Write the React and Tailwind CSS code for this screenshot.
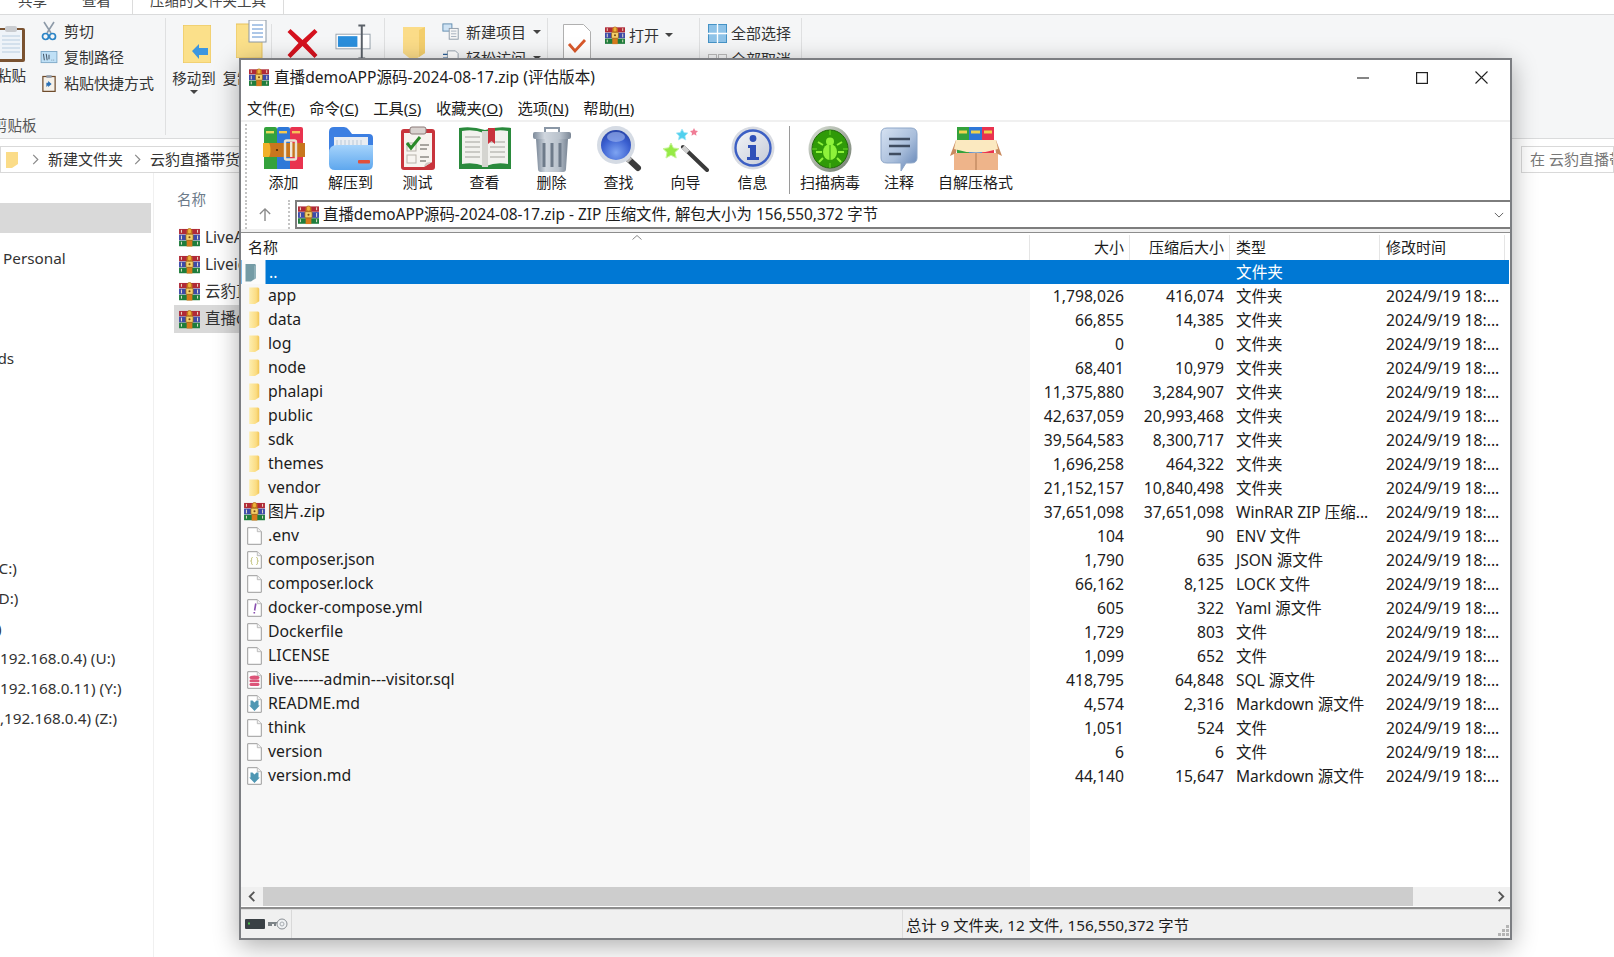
import React from "react";

const FONT = "[font-family:'Noto_Sans','Noto_Sans_CJK_SC',sans-serif]";

function Rar({ className = "w-[21px] h-[19px]" }) {
  return (
    <svg viewBox="0 0 22 20" className={className + " shrink-0"}>
      <rect x="0" y="1" width="22" height="5.6" fill="#b02a37" />
      <rect x="0" y="7" width="22" height="6" fill="#3d4aa8" />
      <rect x="0" y="13.4" width="22" height="5.8" fill="#1f7d3c" />
      <path d="M2.5 2v3M2.5 8v4M2.5 14.5v3M19.5 2v3M19.5 8v4M19.5 14.5v3" stroke="#f1ead0" strokeWidth="1" />
      <rect x="8" y="2" width="6" height="17.5" fill="#d77a1c" />
      <rect x="7.2" y="6.5" width="7.6" height="6.5" rx="1" fill="#f4cf6a" stroke="#8a5a12" strokeWidth="0.7" />
      <rect x="9" y="0.6" width="4" height="5.4" rx="1.6" fill="#f0b23c" stroke="#a86a14" strokeWidth="0.7" />
      <circle cx="11" cy="9.7" r="1.1" fill="#7a4a10" />
    </svg>
  );
}

function Folder() {
  return (
    <svg viewBox="0 0 12 18" className="w-[13px] h-[19px] shrink-0">
      <defs>
        <linearGradient id="fold" x1="0" x2="1" y1="0" y2="0">
          <stop offset="0" stopColor="#fdeeb0" />
          <stop offset="0.7" stopColor="#fbdc82" />
          <stop offset="1" stopColor="#f0c454" />
        </linearGradient>
      </defs>
      <path d="M1 1.5h8.5l1 1v12l-4 2.5H1z" fill="url(#fold)" />
    </svg>
  );
}

function ParentFolder() {
  return (
    <svg viewBox="0 0 24 24" className="w-[25px] h-[24px] shrink-0">
      <rect width="24" height="24" fill="#fbfbfb" />
      <path d="M4 4h9.5l1 1v13l-5 3.5H4z" fill="#749ba5" />
      <path d="M14.5 5v13l-2 1.5V6z" fill="#8fb0b8" />
    </svg>
  );
}

function Page({ kind }) {
  return (
    <svg viewBox="0 0 15 18" className="w-[15px] h-[18px] shrink-0">
      <path d="M.7.7h9.6l4 4v12.6H.7z" fill="#fff" stroke="#9c9c9c" strokeWidth="1" />
      <path d="M10.3.7v4h4" fill="#f1f1f1" stroke="#b0b0b0" strokeWidth="0.8" />
      {kind === "json" && (
        <path d="M5.6 6.5c-1.3 0-1 1-1 2s-.2 1.4-1 1.5c.8.1 1 .5 1 1.5s-.3 2 1 2M9.4 6.5c1.3 0 1 1 1 2s.2 1.4 1 1.5c-.8.1-1 .5-1 1.5s.3 2-1 2" fill="none" stroke="#b4b65e" strokeWidth="0.9" />
      )}
      {kind === "yml" && <path d="M8.8 4.5 7.6 11.5M7.3 13v1.6" stroke="#8a4fb0" strokeWidth="1.6" fill="none" />}
      {kind === "sql" && (
        <g fill="#dc5478">
          <ellipse cx="7.5" cy="6.5" rx="5" ry="2" />
          <rect x="2.5" y="8.6" width="10" height="2.6" rx="1.2" />
          <rect x="2.5" y="12" width="10" height="3" rx="1.4" />
        </g>
      )}
      {kind === "md" && <path d="M3.5 5.5h2l2 2 2-2h2v5h1.3L7.5 16 2.2 10.5h1.3z" fill="#4f97b3" />}
    </svg>
  );
}

const IcAdd = () => (
  <svg viewBox="0 0 42 44" className="w-[42px] h-[44px]">
    <path d="M1 3q0-2 2-2h9q2 0 2 2v40H1z" fill="#34a23c" />
    <path d="M14 3q0-2 2-2h9q2 0 2 2v40H14z" fill="#2f78d8" />
    <path d="M27 3q0-2 2-2h9q2 0 2 2v40H27z" fill="#e9334f" />
    <rect x="3" y="5" width="8" height="2.4" fill="#e9d95a" />
    <rect x="16" y="5" width="8" height="2.4" fill="#f3c851" />
    <rect x="29" y="5" width="8" height="2.4" fill="#f6c15a" />
    <rect x="0" y="17" width="42" height="14" fill="#c8761e" />
    <path d="M0 17h6c2 3 2 11 0 14H0z" fill="#f0b12a" />
    <rect x="22" y="14.5" width="11" height="19" rx="1.5" fill="none" stroke="#e9e2d4" strokeWidth="2.4" />
    <circle cx="14" cy="24" r="1.1" fill="#4a2a08" />
    <rect x="27" y="16" width="2.4" height="15" fill="#efe8da" />
  </svg>
);
const IcExtract = () => (
  <svg viewBox="0 0 46 44" className="w-[46px] h-[44px]">
    <defs>
      <linearGradient id="ex1" x1="0" x2="0" y1="0" y2="1">
        <stop offset="0" stopColor="#a5d3fb" />
        <stop offset="1" stopColor="#5ea7ee" />
      </linearGradient>
    </defs>
    <path d="M1 6q0-5 5-5h10q3 0 5 3l3 4h17q4 0 4 4v24H1z" fill="#3c7fe2" />
    <rect x="6" y="11" width="34" height="14" fill="#e9edf2" />
    <path d="M9 14v8M13 14v8M17 14v8M21 14v8M25 14v8M29 14v8M33 14v8" stroke="#b9c8d8" strokeWidth="1" />
    <path d="M1 27q0-8 8-8h36v19q0 6-6 6H7q-6 0-6-6z" fill="url(#ex1)" />
    <rect x="30" y="34" width="12" height="3.4" rx="1" fill="#e0503c" />
  </svg>
);
const IcTest = () => (
  <svg viewBox="0 0 36 44" className="w-[36px] h-[44px]">
    <rect x="1" y="3" width="34" height="41" rx="3" fill="#c8343c" />
    <path d="M4 7h28v29l-8 5H4z" fill="#f7f4f0" />
    <path d="M24 41l8-5c-2 0-5 0-6 1s-2 3-2 4z" fill="#cfc9c4" />
    <rect x="10" y="1" width="16" height="7" rx="2" fill="#d9d3d0" stroke="#8b7a78" strokeWidth="1" />
    <rect x="7" y="17" width="9" height="8" fill="none" stroke="#b8b2aa" />
    <rect x="7" y="29" width="9" height="8" fill="none" stroke="#b8b2aa" />
    <path d="M7 17l4 5 9-11" fill="none" stroke="#2b8a2a" strokeWidth="3" />
    <path d="M20 19h9M20 23h7M20 31h9M20 35h6" stroke="#8f8a85" strokeWidth="1.4" />
  </svg>
);
const IcView = () => (
  <svg viewBox="0 0 52 44" className="w-[52px] h-[44px]">
    <path d="M0 2q13-2 26 2q13-4 26-2v41H0z" fill="#2a8a3c" />
    <path d="M3 5q12-2 22 2v33q-10-4-22-2z" fill="#f2f2ee" />
    <path d="M49 5q-12-2-22 2v33q10-4 22-2z" fill="#f2f2ee" />
    <path d="M6 11h15M6 16h15M6 21h15M6 26h15M6 31h15M31 16h15M31 21h15M31 26h15M31 31h15" stroke="#bdbdb8" strokeWidth="1.6" />
    <rect x="23" y="5" width="6" height="36" fill="#d5d5d0" />
    <path d="M29 2h7v16l-3.5-3-3.5 3z" fill="#c8323c" />
  </svg>
);
const IcTrash = () => (
  <svg viewBox="0 0 40 46" className="w-[40px] h-[46px]">
    <defs>
      <linearGradient id="tr" x1="0" x2="1" y1="0" y2="0">
        <stop offset="0" stopColor="#7d8a9a" />
        <stop offset="0.3" stopColor="#cfd6de" />
        <stop offset="0.7" stopColor="#b9c2cc" />
        <stop offset="1" stopColor="#7a8695" />
      </linearGradient>
    </defs>
    <path d="M13 6V2h14v4" fill="none" stroke="#8a97a6" strokeWidth="2" />
    <rect x="1" y="6" width="38" height="7" rx="2" fill="url(#tr)" />
    <path d="M4 13h32l-2 30q0 3-3 3H9q-3 0-3-3z" fill="url(#tr)" />
    <path d="M12 17v24M20 17v24M28 17v24" stroke="#6e7b8a" strokeWidth="3" />
  </svg>
);
const IcFind = () => (
  <svg viewBox="0 0 46 46" className="w-[46px] h-[46px]">
    <defs>
      <radialGradient id="fd" cx="0.5" cy="0.75" r="0.8">
        <stop offset="0" stopColor="#7ea4f2" />
        <stop offset="0.6" stopColor="#3a5fd0" />
        <stop offset="1" stopColor="#243fa0" />
      </radialGradient>
    </defs>
    <path d="M28 29l14 13" stroke="#3c3c3c" strokeWidth="6" strokeLinecap="round" />
    <path d="M28 29l6 6" stroke="#b8b8b8" strokeWidth="6" />
    <circle cx="20" cy="19" r="19" fill="#d5dbe4" />
    <circle cx="20" cy="19" r="15" fill="url(#fd)" />
    <ellipse cx="20" cy="11" rx="9" ry="5" fill="#a4b9ee" opacity="0.6" />
  </svg>
);
const IcWizard = () => (
  <svg viewBox="0 0 46 46" className="w-[46px] h-[46px]">
    <path d="M8 17l2.4 5 5.6.6-4 3.8 1.2 5.6-5.2-2.8L3 32l1-5.6-4-3.8 5.6-.8z" fill="#96ea46" stroke="#c8f49c" strokeWidth="1" />
    <path d="M19 3l2 3.5 4 .5-3 3 .8 4-3.8-2-3.6 2 .8-4-3-3 4-.5z" fill="#4fd0ee" stroke="#a8e8f8" strokeWidth="0.8" />
    <path d="M31 2l1.2 2.6 2.8.3-2 2 .5 2.8-2.5-1.4-2.5 1.4.5-2.8-2-2 2.8-.3z" fill="#f07d96" />
    <path d="M20 21l24 23" stroke="#3a3a3a" strokeWidth="4" strokeLinecap="round" />
    <path d="M20 21l5 5" stroke="#cfcfcf" strokeWidth="4" />
  </svg>
);
const IcInfo = () => (
  <svg viewBox="0 0 44 44" className="w-[44px] h-[44px]">
    <defs>
      <linearGradient id="inf" x1="0" x2="1" y1="0" y2="1">
        <stop offset="0" stopColor="#f4f5f8" />
        <stop offset="1" stopColor="#c3c9d6" />
      </linearGradient>
    </defs>
    <circle cx="22" cy="22" r="21.5" fill="#d8dbe2" />
    <circle cx="22" cy="22" r="17.5" fill="url(#inf)" stroke="#3c5fc4" strokeWidth="2.4" />
    <circle cx="22" cy="12.5" r="3.4" fill="#2f50b8" />
    <path d="M17 19h8v12h3v3H16v-3h3v-9h-2z" fill="#2f50b8" />
  </svg>
);
const IcScan = () => (
  <svg viewBox="0 0 44 46" className="w-[44px] h-[46px]">
    <defs>
      <linearGradient id="sc" x1="0" x2="1" y1="0" y2="1">
        <stop offset="0" stopColor="#dfe4dc" />
        <stop offset="1" stopColor="#6e7a6a" />
      </linearGradient>
    </defs>
    <ellipse cx="22" cy="23" rx="21.5" ry="23" fill="url(#sc)" />
    <ellipse cx="22" cy="23" rx="18" ry="19" fill="#2f9a08" stroke="#1f6a08" />
    <path d="M22 4v5M22 37v5M4 23h5M35 23h5" stroke="#6ad82a" strokeWidth="1" />
    <ellipse cx="22" cy="26" rx="7" ry="8" fill="#8ef23a" />
    <circle cx="22" cy="15.5" r="4" fill="#8ef23a" />
    <path d="M15 19l-5-3M29 19l5-3M14 26H8M30 26h6M15 32l-4 4M29 32l4 4" stroke="#8ef23a" strokeWidth="2" />
    <path d="M22 19v15" stroke="#2f9a08" />
  </svg>
);
const IcNote = () => (
  <svg viewBox="0 0 40 46" className="w-[40px] h-[46px]">
    <defs>
      <linearGradient id="nt" x1="0" x2="1" y1="0" y2="1">
        <stop offset="0" stopColor="#d6e2f2" />
        <stop offset="0.55" stopColor="#a9bedb" />
        <stop offset="1" stopColor="#5f81b4" />
      </linearGradient>
    </defs>
    <path d="M8 2h24q6 0 6 6v24q0 5-6 5h-5l-5 8v-8H8q-6 0-6-5V8q0-6 6-6z" fill="url(#nt)" stroke="#8da6c8" />
    <path d="M10 13h21M10 20h21M10 28h12" stroke="#3f4c60" strokeWidth="2.4" />
  </svg>
);
const IcSfx = () => (
  <svg viewBox="0 0 52 44" className="w-[52px] h-[44px]">
    <rect x="7" y="1" width="12" height="26" fill="#34a23c" />
    <rect x="19" y="1" width="13" height="26" fill="#2f78d8" />
    <rect x="32" y="1" width="12" height="26" fill="#e9334f" />
    <path d="M9 6h8M21 6h9M34 6h8" stroke="#f0d24e" strokeWidth="3" />
    <path d="M4 27h44v17H4z" fill="#eeb48a" />
    <path d="M26 27v17" stroke="#b07850" />
    <path d="M0 30 L6 14 H8 L6 27z M52 30 L46 14 H44 L46 27z" fill="#c98a5e" />
    <path d="M6 14h40l2 9q-22 7-44 0z" fill="#fbe9c0" />
  </svg>
);

function SmallIcon({ kind }) {
  if (kind === "cut")
    return (
      <svg viewBox="0 0 16 20" className="w-[16px] h-[20px] shrink-0">
        <path d="M3 1l7 11M13 1 6 12" stroke="#8d9aa8" strokeWidth="1.6" fill="none" />
        <circle cx="4.5" cy="15.5" r="3" fill="none" stroke="#2b84c6" strokeWidth="1.7" />
        <circle cx="11.5" cy="15.5" r="3" fill="none" stroke="#2b84c6" strokeWidth="1.7" />
      </svg>
    );
  if (kind === "path")
    return (
      <svg viewBox="0 0 18 14" className="w-[18px] h-[13px] shrink-0">
        <rect x=".5" y=".5" width="17" height="12" fill="#bfe0f6" stroke="#7fa9c8" />
        <path d="M3 3l1 7M6 3l1 7M9 4v5M12 9.5v.5M14 9.5v.5" stroke="#3a4a5a" strokeWidth="1" />
      </svg>
    );
  if (kind === "short")
    return (
      <svg viewBox="0 0 16 20" className="w-[14px] h-[19px] shrink-0">
        <rect x="1" y="2" width="14" height="17" fill="#f5f1ea" stroke="#6e4a2a" strokeWidth="1.4" />
        <rect x="5" y="0.5" width="6" height="3" fill="#8f99a6" />
        <path d="M5 14V9h2V7l4 3.5L7 14v-2z" fill="#2a6fb4" />
      </svg>
    );
  if (kind === "new")
    return (
      <svg viewBox="0 0 20 20" className="w-[18px] h-[18px] shrink-0">
        <rect x="1" y="1" width="10" height="8" fill="#cfe3f4" stroke="#5b88ac" />
        <rect x="8" y="6" width="10" height="12" fill="#f5f5f5" stroke="#8b98a6" />
        <path d="M10 9h6M10 12h6M10 15h6" stroke="#a3aebb" />
      </svg>
    );
  if (kind === "easy")
    return (
      <svg viewBox="0 0 20 18" className="w-[18px] h-[16px] shrink-0">
        <path d="M6 1h9l3 3v13H6z" fill="#fff" stroke="#8b98a6" />
        <path d="M1 5h5M1 9h5" stroke="#2b5f96" strokeWidth="1.4" />
      </svg>
    );
  return (
    <svg viewBox="0 0 20 20" className="w-[19px] h-[19px] shrink-0">
      <rect x=".5" y=".5" width="19" height="19" fill="#8fc3e8" stroke="#3f8fc4" />
      <path d="M10 0v20M0 10h20" stroke="#fff" strokeWidth="1.4" />
    </svg>
  );
}

const Grip = ({ h = "h-full" }) => <div className={"w-0 border-l-2 border-dotted border-[#c4c4c4] " + h} />;

const Caret = () => (
  <svg viewBox="0 0 8 4" className="w-[8px] h-[4px] shrink-0">
    <path d="M0 0h8L4 4z" fill="#444" />
  </svg>
);

const Chevron = () => (
  <svg viewBox="0 0 7 12" className="w-[7px] h-[11px] shrink-0">
    <path d="M1 1l5 5-5 5" fill="none" stroke="#8a8a8a" strokeWidth="1.3" />
  </svg>
);

const tools = [
  { l: "添加", I: IcAdd },
  { l: "解压到", I: IcExtract },
  { l: "测试", I: IcTest },
  { l: "查看", I: IcView },
  { l: "删除", I: IcTrash },
  { l: "查找", I: IcFind },
  { l: "向导", I: IcWizard },
  { l: "信息", I: IcInfo },
];
const tools2 = [
  { l: "扫描病毒", w: "w-[70px]", I: IcScan },
  { l: "注释", w: "w-[68px]", I: IcNote },
  { l: "自解压格式", w: "w-[85px]", I: IcSfx },
];

const T = "2024/9/19 18:...";
const rows = [
  ["app", "1,798,026", "416,074", "文件夹", "f"],
  ["data", "66,855", "14,385", "文件夹", "f"],
  ["log", "0", "0", "文件夹", "f"],
  ["node", "68,401", "10,979", "文件夹", "f"],
  ["phalapi", "11,375,880", "3,284,907", "文件夹", "f"],
  ["public", "42,637,059", "20,993,468", "文件夹", "f"],
  ["sdk", "39,564,583", "8,300,717", "文件夹", "f"],
  ["themes", "1,696,258", "464,322", "文件夹", "f"],
  ["vendor", "21,152,157", "10,840,498", "文件夹", "f"],
  ["图片.zip", "37,651,098", "37,651,098", "WinRAR ZIP 压缩...", "z"],
  [".env", "104", "90", "ENV 文件", ""],
  ["composer.json", "1,790", "635", "JSON 源文件", "json"],
  ["composer.lock", "66,162", "8,125", "LOCK 文件", ""],
  ["docker-compose.yml", "605", "322", "Yaml 源文件", "yml"],
  ["Dockerfile", "1,729", "803", "文件", ""],
  ["LICENSE", "1,099", "652", "文件", ""],
  ["live------admin---visitor.sql", "418,795", "64,848", "SQL 源文件", "sql"],
  ["README.md", "4,574", "2,316", "Markdown 源文件", "md"],
  ["think", "1,051", "524", "文件", ""],
  ["version", "6", "6", "文件", ""],
  ["version.md", "44,140", "15,647", "Markdown 源文件", "md"],
];

const COLS = "grid grid-cols-[789px_100px_100px_150px_125px_1fr]";

function RibbonRow({ icon, text, caret, cls = "" }) {
  return (
    <div className={"flex items-center h-[26px] gap-[6px] whitespace-nowrap " + cls}>
      <div className="w-[18px] flex justify-center">{icon}</div>
      <span>{text}</span>
      {caret && <span className="ml-[1px]"><Caret /></span>}
    </div>
  );
}

function Explorer() {
  return (
    <div className="flex flex-col h-full text-[15px] text-[#333]">
      <div className="h-[14px] overflow-hidden shrink-0 bg-white">
        <div className="flex -mt-[12px] h-[26px] items-center text-[14.5px] text-[#444]">
          <span className="ml-[18px]">共享</span>
          <span className="ml-[35px]">查看</span>
          <span className="ml-[21px] h-[26px] border-l border-[#dcdcdc]" />
          <span className="ml-[17px]">压缩的文件夹工具</span>
          <span className="ml-[17px] h-[26px] border-l border-[#dcdcdc]" />
        </div>
      </div>
      <div className="h-[125px] shrink-0 bg-[#f5f6f7] border-t border-b border-[#dadbdc] flex overflow-hidden py-[3px]">
        <div className="w-[166px] shrink-0 border-r border-[#dfe0e1] relative flex">
          <div className="w-[40px] shrink-0 flex flex-col overflow-hidden">
            <svg viewBox="0 0 30 38" className="w-[30px] h-[38px] -ml-[4px] mt-[7px] shrink-0">
              <rect x="1" y="3" width="28" height="34" rx="2" fill="#7a5230" />
              <rect x="4" y="5" width="22" height="29" fill="#eef3f8" />
              <path d="M6 11h18M6 15h18M6 19h18M6 23h18M6 27h18" stroke="#b8cde0" />
              <rect x="9" y="1" width="12" height="6" rx="2" fill="#c9ccd0" />
            </svg>
            <span className="mt-[2px] -ml-[3px] whitespace-nowrap text-[14.5px]">粘贴</span>
            <span className="mt-[28px] -ml-[7px] whitespace-nowrap text-[14.5px] text-[#555]">剪贴板</span>
          </div>
          <div className="flex flex-col text-[15px]">
            <RibbonRow icon={<SmallIcon kind="cut" />} text="剪切" />
            <RibbonRow icon={<SmallIcon kind="path" />} text="复制路径" />
            <RibbonRow icon={<SmallIcon kind="short" />} text="粘贴快捷方式" />
          </div>
        </div>
        <div className="w-[219px] shrink-0 border-r border-[#dfe0e1] flex text-[14.5px]">
          <div className="w-[56px] flex flex-col items-center shrink-0">
            <svg viewBox="0 0 28 38" className="w-[28px] h-[38px] mt-[7px] ml-[5px] shrink-0">
              <rect width="28" height="38" fill="#fbe08a" stroke="#e8c25c" />
              <path d="M12 26l7-7v4h9v7h-9v4z" fill="#3c96e0" transform="translate(-3 0)" />
            </svg>
            <span className="mt-[5px] whitespace-nowrap">移动到</span>
            <Caret />
          </div>
          <div className="w-[46px] flex flex-col items-center shrink-0">
            <svg viewBox="0 0 32 38" className="w-[32px] h-[38px] mt-[2px] ml-[14px] shrink-0">
              <rect y="4" width="26" height="34" fill="#fbe08a" stroke="#e8c25c" />
              <rect x="13" y="0" width="17" height="22" fill="#fff" stroke="#8b98a6" />
              <path d="M16 5h11M16 9h11M16 13h11M16 17h11" stroke="#5b8fd0" />
            </svg>
            <span className="mt-[10px] -ml-[1px] whitespace-nowrap">复制到</span>
          </div>
          <div className="h-[70px] mt-[6px] ml-[3px] border-l border-[#dfe0e1]" />
          <svg viewBox="0 0 30 32" className="w-[31px] h-[32px] mt-[9px] ml-[15px] shrink-0">
            <path d="M3 2l12 11L27 2l3 3-11 11 11 12-3 3-12-12L3 31l-3-3 11-12L0 5z" fill="#d5121e" />
          </svg>
          <svg viewBox="0 0 38 36" className="w-[37px] h-[36px] mt-[6px] ml-[17px] shrink-0">
            <rect x="1" y="10" width="35" height="15" fill="#fff" stroke="#9aa4ae" />
            <rect x="3" y="12" width="20" height="11" fill="#2b8fdc" />
            <path d="M24 1h7M27.5 1v34M24 35h7" stroke="#5a6068" strokeWidth="2" fill="none" />
          </svg>
        </div>
        <div className="w-[163px] shrink-0 border-r border-[#dfe0e1] flex text-[15px]">
          <svg viewBox="0 0 24 36" className="w-[24px] h-[36px] mt-[8px] ml-[17px] shrink-0">
            <path d="M1 1h22v26l-12 8-10-8z" fill="#fbdc88" />
            <path d="M23 1v26l-6 4V4z" fill="#f3ce6c" />
          </svg>
          <div className="flex flex-col ml-[16px]">
            <RibbonRow icon={<SmallIcon kind="new" />} text="新建项目" caret cls="mt-[1px]" />
            <RibbonRow icon={<SmallIcon kind="easy" />} text="轻松访问" caret />
          </div>
        </div>
        <div className="w-[152px] shrink-0 border-r border-[#dfe0e1] flex text-[15px]">
          <svg viewBox="0 0 28 40" className="w-[28px] h-[40px] mt-[6px] ml-[15px] shrink-0">
            <path d="M.5.5h20l7 7v32H.5z" fill="#fff" stroke="#b0b0b0" />
            <path d="M6 20l6 7 10-11" fill="none" stroke="#d9582a" strokeWidth="2.8" />
          </svg>
          <div className="flex flex-col ml-[14px] mt-[4px]">
            <div className="flex items-center gap-[4px] h-[26px]">
              <Rar className="w-[20px] h-[19px]" />
              <span>打开</span>
              <span className="ml-[2px]"><Caret /></span>
            </div>
          </div>
        </div>
        <div className="w-[102px] shrink-0 border-r border-[#dfe0e1] flex flex-col pl-[8px] text-[15px] whitespace-nowrap">
          <div className="flex items-center gap-[4px] h-[26px] mt-[2px]">
            <SmallIcon kind="grid" />
            <span>全部选择</span>
          </div>
          <div className="flex items-center gap-[4px] h-[26px]">
            <svg viewBox="0 0 19 10" className="w-[19px] h-[10px]">
              <rect x=".5" y=".5" width="8" height="8" fill="none" stroke="#bbb" />
              <rect x="10.5" y=".5" width="8" height="8" fill="none" stroke="#bbb" />
            </svg>
            <span>全部取消</span>
          </div>
        </div>
        <div className="flex-1" />
      </div>
      <div className="h-[34px] shrink-0 pt-[7px] flex text-[15px]">
        <div className="w-[1508px] h-[27px] border border-[#d9d9d9] flex items-center pl-[5px] whitespace-nowrap">
          <svg viewBox="0 0 12 16" className="w-[12px] h-[16px] shrink-0">
            <path d="M0 0h12v12L6 16H0z" fill="#fbdc88" />
          </svg>
          <span className="ml-[14px]"><Chevron /></span>
          <span className="ml-[9px] text-[#333]">新建文件夹</span>
          <span className="ml-[11px]"><Chevron /></span>
          <span className="ml-[9px] text-[#333]">云豹直播带货</span>
        </div>
        <div className="ml-[13px] flex-1 h-[27px] border border-[#d9d9d9] overflow-hidden whitespace-nowrap pl-[8px] leading-[25px] text-[#777]">
          在 云豹直播带货
        </div>
      </div>
      <div className="flex flex-1 min-h-0">
        <div className="w-[154px] shrink-0 border-r border-[#f0f0f0] pt-[30px] text-[15.3px] flex flex-col overflow-hidden">
          <div className="w-[151px] h-[30px] bg-[#d9d9d9] shrink-0" />
          <div className="h-[30px] mt-[10px] pl-[3px] leading-[30px]">Personal</div>
          <div className="h-[30px] mt-[70px] -ml-[66px] leading-[30px]">Downloads</div>
          <div className="h-[30px] mt-[180px] -ml-[6px] leading-[30px]">(C:)</div>
          <div className="h-[30px] -ml-[6px] leading-[30px]">(D:)</div>
          <div className="h-[30px] -ml-[3px] leading-[30px]">)</div>
          <div className="h-[30px] leading-[30px] whitespace-nowrap">192.168.0.4) (U:)</div>
          <div className="h-[30px] leading-[30px] whitespace-nowrap">192.168.0.11) (Y:)</div>
          <div className="h-[30px] leading-[30px] whitespace-nowrap">,192.168.0.4) (Z:)</div>
        </div>
        <div className="flex-1 pl-[20px] text-[15.5px]">
          <div className="h-[51px] pl-[3px] pt-[16px] text-[#6d7b8a] text-[14.5px]">名称</div>
          {["LiveAnchor.zip", "Liveiot.zip", "云豹直播.zip", "直播demo.zip"].map((n, i) => (
            <div key={n} className={"flex items-center h-[27px] w-[80px] pl-[5px] gap-[5px] whitespace-nowrap " + (i === 3 ? "bg-[#d9d9d9] h-[28px]" : "")}>
              <Rar />
              <span>{n}</span>
            </div>
          ))}
        </div>
      </div>
    </div>
  );
}

function WinRar() {
  return (
    <div className="absolute left-[239px] top-[58px] w-[1273px] h-[882px] bg-white border-2 border-[#7c7e82] shadow-[0_6px_24px_rgba(0,0,0,0.32)] flex flex-col text-[15.7px] text-[#1c1c1c]">
      <div className="h-[35px] shrink-0 flex items-center pl-[8px]">
        <Rar className="w-[20px] h-[19px]" />
        <span className="ml-[5px] whitespace-nowrap text-[15.6px]">直播demoAPP源码-2024-08-17.zip (评估版本)</span>
        <div className="ml-auto flex items-center">
          <svg viewBox="0 0 12 12" className="w-[12px] h-[12px]"><path d="M0 6h12" stroke="#222" strokeWidth="1.1" /></svg>
          <svg viewBox="0 0 12 12" className="w-[12px] h-[12px] ml-[47px]"><rect x=".6" y=".6" width="10.8" height="10.8" fill="none" stroke="#222" strokeWidth="1.2" /></svg>
          <svg viewBox="0 0 13 13" className="w-[13px] h-[13px] ml-[47px] mr-[22px]"><path d="M.5.5l12 12M12.5.5l-12 12" stroke="#222" strokeWidth="1.1" /></svg>
        </div>
      </div>
      <div className="h-[25px] shrink-0 flex items-center pl-[6px] pt-[1px] gap-[14.5px] text-[15.3px] whitespace-nowrap">
        <span>文件(<u>F</u>)</span>
        <span>命令(<u>C</u>)</span>
        <span>工具(<u>S</u>)</span>
        <span>收藏夹(<u>O</u>)</span>
        <span>选项(<u>N</u>)</span>
        <span>帮助(<u>H</u>)</span>
      </div>
      <div className="h-[80px] shrink-0 border-t-2 border-[#f0f0f0] flex pl-[4px] pt-[2px]">
        <Grip h="h-[74px]" />
        <div className="flex ml-[3px]">
          {tools.map(({ l, I }) => (
            <div key={l} className="w-[67px] flex flex-col items-center text-[15px] shrink-0">
              <div className="h-[47px] pt-[2px] flex items-start justify-center"><I /></div>
              <span className="leading-[22px] whitespace-nowrap">{l}</span>
            </div>
          ))}
        </div>
        <div className="w-[1px] h-[68px] mt-[2px] mx-[3px] bg-[#9a9a9a]" />
        <div className="flex ml-[2px]">
          {tools2.map(({ l, w, I }) => (
            <div key={l} className={w + " flex flex-col items-center text-[15px] shrink-0"}>
              <div className="h-[47px] pt-[2px] flex items-start justify-center"><I /></div>
              <span className="leading-[22px] whitespace-nowrap">{l}</span>
            </div>
          ))}
        </div>
      </div>
      <div className="h-[29px] shrink-0 flex items-stretch pl-[4px]">
        <Grip />
        <div className="w-[36px] mr-[5px] flex items-center justify-center text-[#888]">
          <svg viewBox="0 0 14 16" className="w-[14px] h-[15px]"><path d="M7 15V2M1.5 7.5 7 2l5.5 5.5" fill="none" stroke="#8a8a8a" strokeWidth="1.5" /></svg>
        </div>
        <Grip />
        <div className="flex-1 ml-[5px] border-2 border-[#7d7d7d] border-r-0 flex items-center pl-[1px] pr-[6px] whitespace-nowrap text-[15.4px]">
          <Rar className="w-[21px] h-[20px]" />
          <span className="ml-[4px]">直播demoAPP源码-2024-08-17.zip - ZIP 压缩文件, 解包大小为 156,550,372 字节</span>
          <svg viewBox="0 0 12 7" className="ml-auto w-[10px] h-[6px]"><path d="M1 1l5 5 5-5" fill="none" stroke="#444" /></svg>
        </div>
      </div>
      <div className="h-[3px] shrink-0 bg-[#f0f0f0]" />
      <div className="flex-1 min-h-0 border-t border-[#8d8d8d] flex flex-col">
        <div className={COLS + " h-[27px] pt-[2px] shrink-0 text-[15px] relative"}>
          <div className="pl-[7px] flex items-center border-r border-[#e5e5e5]">名称
            <svg viewBox="0 0 10 5" className="absolute left-[391px] top-[2px] w-[10px] h-[5px]"><path d="M.5 4.5 5 .5l4.5 4" fill="none" stroke="#888" /></svg>
          </div>
          <div className="pr-[5px] flex items-center justify-end border-r border-[#e5e5e5]">大小</div>
          <div className="pr-[5px] flex items-center justify-end border-r border-[#e5e5e5]">压缩后大小</div>
          <div className="pl-[6px] flex items-center border-r border-[#e5e5e5]">类型</div>
          <div className="pl-[6px] flex items-center border-r border-[#e5e5e5]">修改时间</div>
          <div />
        </div>
        <div className={COLS + " h-[24px] shrink-0 bg-[#0078d4] text-white mr-[1px]"}>
          <div className="flex items-center whitespace-nowrap">
            <ParentFolder />
            <span className="ml-[3px]">..</span>
          </div>
          <div />
          <div />
          <div className="pl-[6px] pt-[1px] flex items-center">文件夹</div>
          <div />
          <div />
        </div>
        {rows.map((r) => (
          <div key={r[0]} className={COLS + " h-[24px] shrink-0"}>
            <div className="bg-[#f7f7f7] flex items-center whitespace-nowrap text-[15.8px] pb-[1px]">
              <div className="w-[27px] flex justify-center shrink-0">
                {r[4] === "f" ? <Folder /> : r[4] === "z" ? <Rar className="w-[21px] h-[19px]" /> : <Page kind={r[4]} />}
              </div>
              <span>{r[0]}</span>
            </div>
            <div className="pr-[6px] pt-[1px] flex items-center justify-end">{r[1]}</div>
            <div className="pr-[6px] pt-[1px] flex items-center justify-end">{r[2]}</div>
            <div className="pl-[6px] pt-[1px] flex items-center whitespace-nowrap text-[15.5px]">{r[3]}</div>
            <div className="pl-[6px] pt-[1px] flex items-center whitespace-nowrap">{T}</div>
            <div />
          </div>
        ))}
        <div className={COLS + " flex-1 min-h-0"}>
          <div className="bg-[#f7f7f7]" />
        </div>
        <div className="h-[19px] shrink-0 flex bg-[#f0f0f0] items-center">
          <div className="w-[22px] flex justify-center">
            <svg viewBox="0 0 8 12" className="w-[8px] h-[11px]"><path d="M6.5 1 1.5 6l5 5" fill="none" stroke="#555" strokeWidth="2" /></svg>
          </div>
          <div className="w-[1150px] h-[19px] bg-[#cdcdcd]" />
          <div className="flex-1 flex justify-end pr-[5px]">
            <svg viewBox="0 0 8 12" className="w-[8px] h-[11px]"><path d="M1.5 1l5 5-5 5" fill="none" stroke="#555" strokeWidth="2" /></svg>
          </div>
        </div>
      </div>
      <div className="h-[31px] shrink-0 mt-[1px] border-t-2 border-[#8d8d8d] bg-[#f0f0f0] flex items-stretch text-[15.3px]">
        <div className="w-[51px] border-r border-[#d9d9d9] flex items-center pl-[4px] gap-[3px] border-t border-t-[#dcdcdc]">
          <svg viewBox="0 0 20 10" className="w-[20px] h-[10px] shrink-0">
            <rect width="20" height="10" rx="1" fill="#3a4045" />
            <rect x="3" y="3.5" width="2" height="2" fill="#49c04a" />
          </svg>
          <svg viewBox="0 0 20 12" className="w-[20px] h-[12px] shrink-0">
            <path d="M0 4h10v1.5H8V8H6V6H4v2H0z" fill="#7d8387" />
            <circle cx="14" cy="6" r="5" fill="#f0f2f4" stroke="#8a8f94" />
            <circle cx="14" cy="6" r="2" fill="none" stroke="#a8adb2" />
          </svg>
        </div>
        <div className="w-[611px] border-r border-[#dcdcdc] border-t border-t-[#dcdcdc]" />
        <div className="flex-1 flex items-center pl-[3px] pt-[3px] whitespace-nowrap relative border-t border-[#dcdcdc]">
          总计 9 文件夹, 12 文件, 156,550,372 字节
          <svg viewBox="0 0 11 11" className="absolute right-[1px] bottom-[2px] w-[11px] h-[11px]">
            <path d="M8 0h3v3H8zM4 4h3v3H4zM8 4h3v3H8zM0 8h3v3H0zM4 8h3v3H4zM8 8h3v3H8z" fill="#b4b4b4" />
          </svg>
        </div>
      </div>
    </div>
  );
}

export default function App() {
  return (
    <div className={"relative w-[1614px] h-[957px] overflow-hidden bg-white " + FONT}>
      <Explorer />
      <WinRar />
    </div>
  );
}
